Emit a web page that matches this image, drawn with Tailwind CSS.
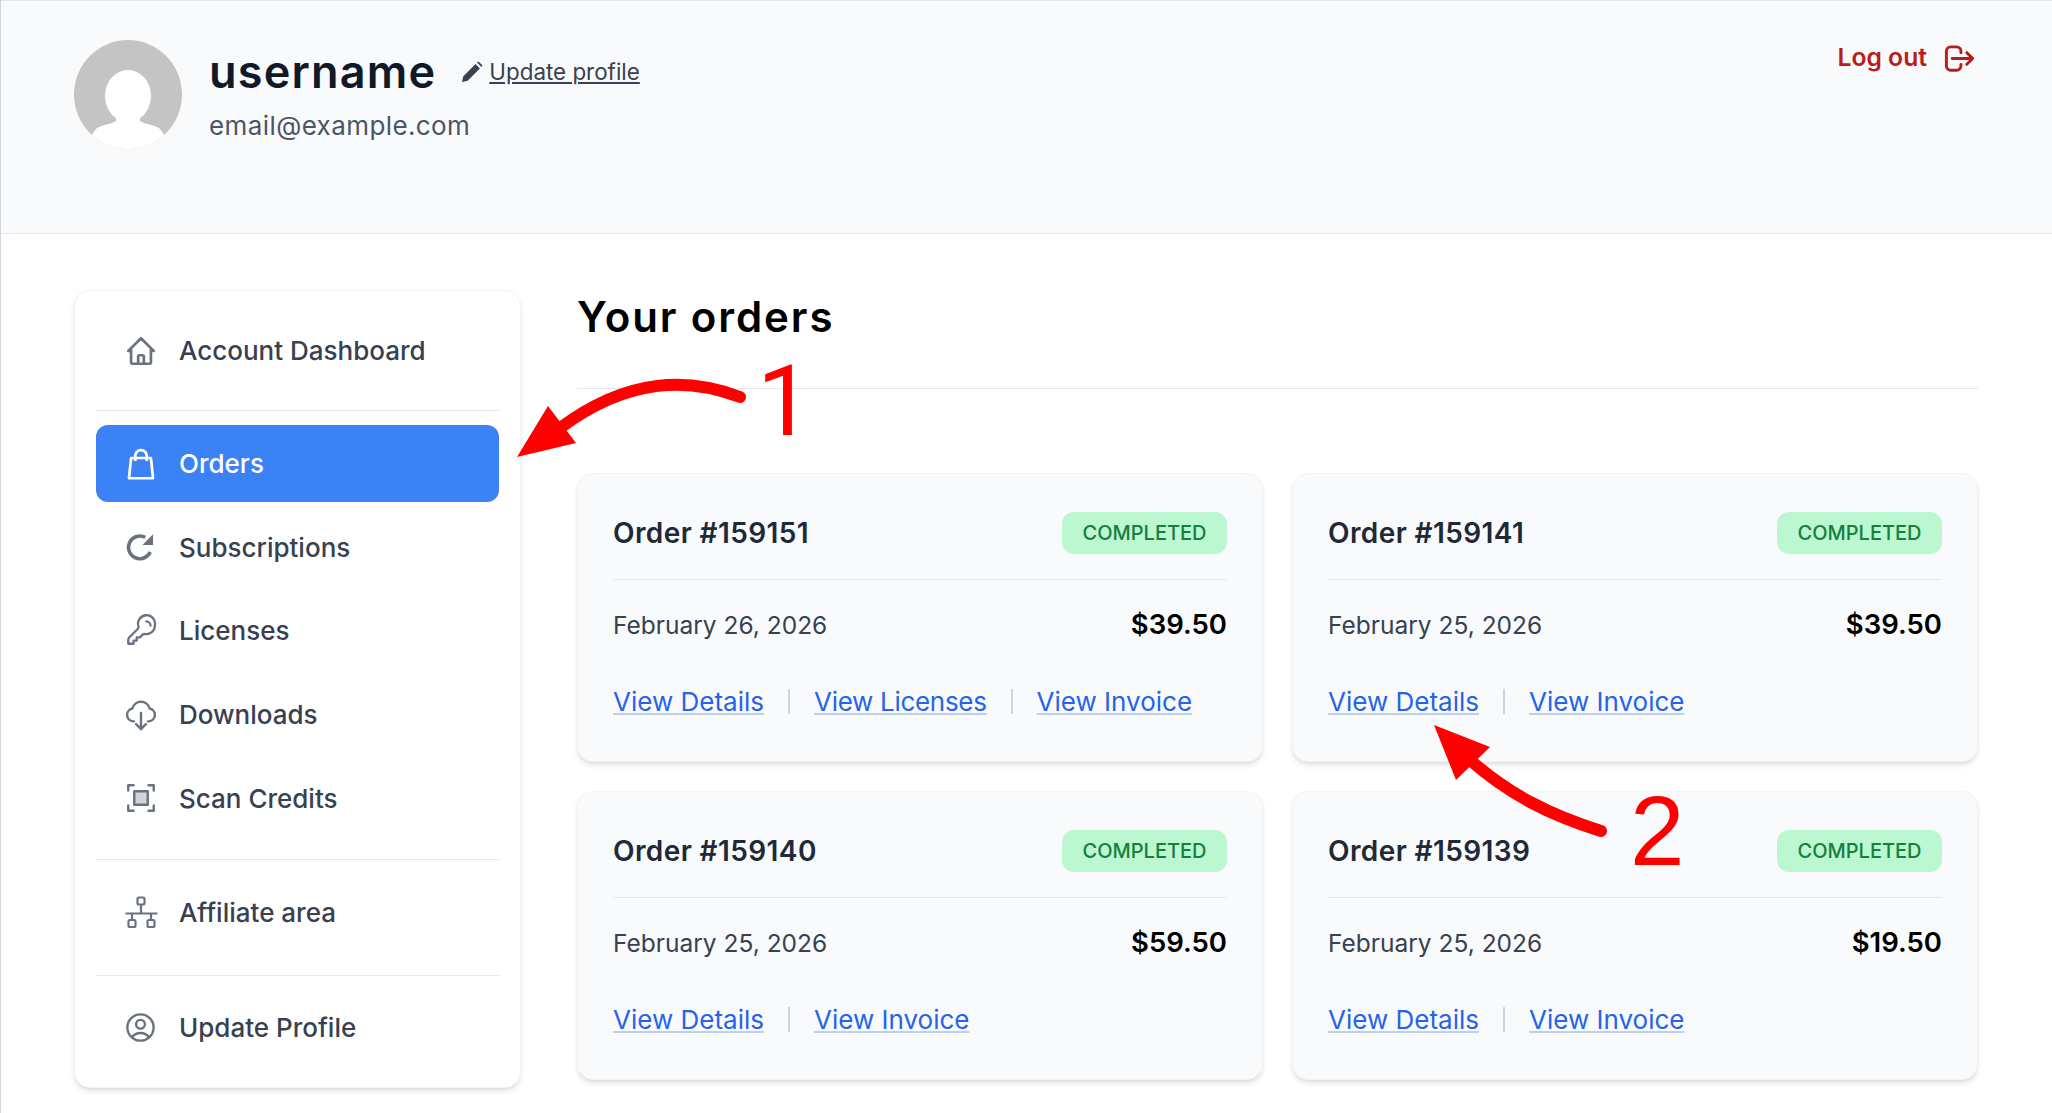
<!DOCTYPE html>
<html lang="en">
<head>
    <meta charset="UTF-8">
    <title>Your orders</title>
    <script src="https://cdn.jsdelivr.net/npm/@tailwindcss/browser@4"></script>
</head>
<body class="bg-white font-['Inter',sans-serif] text-[#374151]">
<div class="relative h-[1113px] overflow-hidden border-l border-gray-300">

    <!-- profile header -->
    <header class="flex h-[234px] justify-between border-y border-gray-200 bg-[#f9fafb] pl-[73px] pr-[75px]">
        <div class="flex items-start pt-[39px]">
            <svg class="h-[109px] w-[108px]" viewBox="0 0 108 109">
                <defs><clipPath id="avatar"><ellipse cx="54" cy="54.5" rx="54" ry="54.5"/></clipPath></defs>
                <ellipse cx="54" cy="54.5" rx="54" ry="54.5" fill="#c4c4c4"/>
                <g clip-path="url(#avatar)" fill="#fff">
                    <ellipse cx="54" cy="56" rx="23" ry="26"/>
                    <path d="M42 76h24v5c4 3 14 4 19 7 3 3 6 8 8 13v10H15v-10c2-5 5-10 8-13 5-3 15-4 19-7z"/>
                </g>
            </svg>
            <div class="ml-[27px] -mt-[4px]">
                <div class="flex h-[72px] items-center">
                    <h1 class="text-[45px] font-semibold tracking-[1.2px] text-[#111827]">username</h1>
                    <svg class="ml-[25px] h-[22px] w-[22px] text-[#374151]" viewBox="0 0 22 22" fill="currentColor"><path d="M1 21l1.2-5.6L14.5 3.1l4.4 4.4L6.6 19.8zM16 1.6l1.5-1.1 4 4-1.1 1.5z"/></svg>
                    <a href="#" class="ml-[6px] text-[22.4px] text-[#374151] underline">Update profile</a>
                </div>
                <p class="mt-[2px] text-[26px] leading-8 tracking-[0.4px] text-[#4b5563]">email@example.com</p>
            </div>
        </div>
        <a href="#" class="mt-[43px] flex h-7 items-center gap-[15px] text-[24.7px] font-semibold text-[#b91c1c]">
            Log out
            <svg class="h-[35px] w-[35px]" viewBox="0 0 24 24" fill="none" stroke="currentColor" stroke-width="2" stroke-linecap="round" stroke-linejoin="round"><path d="M17 16l4-4m0 0l-4-4m4 4H7m6 4v1a3 3 0 01-3 3H6a3 3 0 01-3-3V7a3 3 0 013-3h4a3 3 0 013 3v1"/></svg>
        </a>
    </header>

    <div class="flex items-start gap-14 pl-[73px] pr-[74px] pt-14">

        <!-- account menu -->
        <nav class="w-[447px] shrink-0 rounded-2xl border border-gray-100 bg-white p-[21px] text-[26px] font-medium shadow-md">
            <a href="#" class="flex h-[77px] items-center gap-[22px] px-[29px]">
                <svg class="-mx-[1px] h-[34px] w-[34px] text-gray-500" viewBox="0 0 24 24" fill="none" stroke="currentColor" stroke-width="1.9" stroke-linecap="round" stroke-linejoin="round"><path d="M3 12l2-2m0 0l7-7 7 7M5 10v10a1 1 0 001 1h3m10-11l2 2m-2-2v10a1 1 0 01-1 1h-3m-6 0a1 1 0 001-1v-4a1 1 0 011-1h2a1 1 0 011 1v4a1 1 0 001 1m-6 0h6"/></svg>
                Account Dashboard
            </a>
            <div class="mb-[14px] mt-[21px] border-t border-gray-200"></div>
            <div class="flex flex-col gap-[6.7px]">
                <a href="#" class="flex h-[77px] items-center gap-[22px] rounded-xl bg-[#3b82f6] px-[29px] text-white">
                    <svg class="-mx-[2px] h-[36px] w-[36px]" viewBox="0 0 24 24" fill="none" stroke="currentColor" stroke-width="1.8" stroke-linejoin="round"><path d="M8.2 10V6.5a3.8 3.8 0 017.6 0V10M5.4 8h13.2L20 21.5H4z"/></svg>
                    Orders
                </a>
                <a href="#" class="flex h-[77px] items-center gap-[22px] px-[29px]">
                    <svg class="-mx-[1px] h-[34px] w-[34px] text-gray-500" viewBox="0 0 24 24" fill="none" stroke="currentColor" stroke-width="2.5"><path d="M18.5 15.5A8 8 0 1115 5.2"/><path d="M20.5 3v7.5H13z" fill="currentColor" stroke="none"/></svg>
                    Subscriptions
                </a>
                <a href="#" class="flex h-[77px] items-center gap-[22px] px-[29px]">
                    <svg class="-mx-[1px] h-[34px] w-[34px] text-gray-500" viewBox="0 0 24 24" fill="none" stroke="currentColor" stroke-width="1.6" stroke-linecap="round" stroke-linejoin="round"><path d="M15.75 5.25a3 3 0 013 3m3 0a6 6 0 01-7.03 5.91c-.56-.1-1.16.02-1.57.43L11.25 16.5h-2.25v2.25H6.75V21H3v-2.82c0-.6.24-1.17.66-1.59l6.16-6.16c.41-.41.53-1.01.43-1.57A6 6 0 1121.75 8.25z"/></svg>
                    Licenses
                </a>
                <a href="#" class="flex h-[77px] items-center gap-[22px] px-[29px]">
                    <svg class="-mx-[1px] h-[34px] w-[34px] text-gray-500" viewBox="0 0 24 24" fill="none" stroke="currentColor" stroke-width="1.7" stroke-linecap="round" stroke-linejoin="round"><path d="M7 16.5H6.5a4.6 4.6 0 01-.6-9.1 6.3 6.3 0 0112.2 0 4.6 4.6 0 01-.6 9.1H17"/><path d="M12 10.5V22m-3.5-3.5L12 22l3.5-3.5"/></svg>
                    Downloads
                </a>
                <a href="#" class="flex h-[77px] items-center gap-[22px] px-[29px]">
                    <svg class="-mx-[2px] h-[36px] w-[36px] text-gray-500" viewBox="0 0 24 24" fill="none" stroke="currentColor" stroke-width="1.6" stroke-linecap="round" stroke-linejoin="round"><path d="M3.5 7V3.5H7M17 3.5h3.5V7M20.5 17v3.5H17M7 20.5H3.5V17"/><rect x="7.5" y="7.5" width="9" height="9" fill="#d1d5db"/></svg>
                    Scan Credits
                </a>
            </div>
            <div class="mb-[14px] mt-[22px] border-t border-gray-200"></div>
            <a href="#" class="flex h-[77px] items-center gap-[21px] px-[29px]">
                <svg class="h-[33px] w-[33px] text-gray-500" viewBox="0 0 33 33" fill="none" stroke="currentColor" stroke-width="2.2" stroke-linejoin="round"><rect x="12.5" y="1.5" width="7" height="7" rx="1.5"/><rect x="3.5" y="24" width="7" height="7" rx="1.5"/><rect x="22.5" y="24" width="7" height="7" rx="1.5"/><path d="M16 8.5v8.5M0.5 17.5h32M7 17.5V24M26 17.5V24"/></svg>
                Affiliate area
            </a>
            <div class="mb-[13px] mt-[24px] border-t border-gray-200"></div>
            <a href="#" class="flex h-[77px] items-center gap-[22px] px-[29px]">
                <svg class="-ml-[2px] mr-[-1px] h-[35px] w-[35px] text-gray-500" viewBox="0 0 24 24" fill="none" stroke="currentColor" stroke-width="1.6" stroke-linecap="round" stroke-linejoin="round"><path d="M17.982 18.725A7.488 7.488 0 0012 15.75a7.488 7.488 0 00-5.982 2.975m11.964 0a9 9 0 10-11.963 0m11.963 0A8.966 8.966 0 0112 21a8.966 8.966 0 01-5.982-2.275M15 9.75a3 3 0 11-6 0 3 3 0 016 0z"/></svg>
                Update Profile
            </a>
        </nav>

        <!-- orders -->
        <main class="min-w-0 flex-1">
            <h2 class="flex h-[52px] items-center text-[42px] font-semibold tracking-[1.9px] text-black">Your orders</h2>
            <div class="mt-[46px] border-t border-gray-200"></div>
            <div class="mt-[84px] grid grid-cols-2 gap-[29px]">

                <article class="h-[289px] rounded-2xl border border-gray-100 bg-[#f9fafb] px-[35px] shadow-md">
                    <div class="flex h-[106px] items-center justify-between border-b border-gray-200 pt-[12px]">
                        <h3 class="text-[28px] font-semibold tracking-[0.4px] text-[#1f2937]">Order #159151</h3>
                        <span class="flex h-[42px] w-[165px] items-center justify-center rounded-xl bg-[#bbf7d0] text-[20px] font-medium text-[#15803d]">COMPLETED</span>
                    </div>
                    <div class="mt-[26px] flex items-center justify-between">
                        <span class="text-[24.5px] text-[#374151]">February 26, 2026</span>
                        <span class="-mt-[2px] text-[27.5px] font-semibold text-black">$39.50</span>
                    </div>
                    <div class="mt-[37px] flex items-center gap-[24px] text-[26px] text-[#2563eb]">
                        <a href="#" class="underline decoration-[#bfcfee]">View Details</a>
                        <span class="h-[25px] w-[2px] bg-[#cbd5e1]"></span>
                        <a href="#" class="tracking-[-0.3px] underline decoration-[#bfcfee]">View Licenses</a>
                        <span class="h-[25px] w-[2px] bg-[#cbd5e1]"></span>
                        <a href="#" class="underline decoration-[#bfcfee]">View Invoice</a>
                    </div>
                </article>

                <article class="h-[289px] rounded-2xl border border-gray-100 bg-[#f9fafb] px-[35px] shadow-md">
                    <div class="flex h-[106px] items-center justify-between border-b border-gray-200 pt-[12px]">
                        <h3 class="text-[28px] font-semibold tracking-[0.4px] text-[#1f2937]">Order #159141</h3>
                        <span class="flex h-[42px] w-[165px] items-center justify-center rounded-xl bg-[#bbf7d0] text-[20px] font-medium text-[#15803d]">COMPLETED</span>
                    </div>
                    <div class="mt-[26px] flex items-center justify-between">
                        <span class="text-[24.5px] text-[#374151]">February 25, 2026</span>
                        <span class="-mt-[2px] text-[27.5px] font-semibold text-black">$39.50</span>
                    </div>
                    <div class="mt-[37px] flex items-center gap-[24px] text-[26px] text-[#2563eb]">
                        <a href="#" class="underline decoration-[#bfcfee]">View Details</a>
                        <span class="h-[25px] w-[2px] bg-[#cbd5e1]"></span>
                        <a href="#" class="underline decoration-[#bfcfee]">View Invoice</a>
                    </div>
                </article>

                <article class="h-[289px] rounded-2xl border border-gray-100 bg-[#f9fafb] px-[35px] shadow-md">
                    <div class="flex h-[106px] items-center justify-between border-b border-gray-200 pt-[12px]">
                        <h3 class="text-[28px] font-semibold tracking-[0.4px] text-[#1f2937]">Order #159140</h3>
                        <span class="flex h-[42px] w-[165px] items-center justify-center rounded-xl bg-[#bbf7d0] text-[20px] font-medium text-[#15803d]">COMPLETED</span>
                    </div>
                    <div class="mt-[26px] flex items-center justify-between">
                        <span class="text-[24.5px] text-[#374151]">February 25, 2026</span>
                        <span class="-mt-[2px] text-[27.5px] font-semibold text-black">$59.50</span>
                    </div>
                    <div class="mt-[37px] flex items-center gap-[24px] text-[26px] text-[#2563eb]">
                        <a href="#" class="underline decoration-[#bfcfee]">View Details</a>
                        <span class="h-[25px] w-[2px] bg-[#cbd5e1]"></span>
                        <a href="#" class="underline decoration-[#bfcfee]">View Invoice</a>
                    </div>
                </article>

                <article class="h-[289px] rounded-2xl border border-gray-100 bg-[#f9fafb] px-[35px] shadow-md">
                    <div class="flex h-[106px] items-center justify-between border-b border-gray-200 pt-[12px]">
                        <h3 class="text-[28px] font-semibold tracking-[0.4px] text-[#1f2937]">Order #159139</h3>
                        <span class="flex h-[42px] w-[165px] items-center justify-center rounded-xl bg-[#bbf7d0] text-[20px] font-medium text-[#15803d]">COMPLETED</span>
                    </div>
                    <div class="mt-[26px] flex items-center justify-between">
                        <span class="text-[24.5px] text-[#374151]">February 25, 2026</span>
                        <span class="-mt-[2px] text-[27.5px] font-semibold text-black">$19.50</span>
                    </div>
                    <div class="mt-[37px] flex items-center gap-[24px] text-[26px] text-[#2563eb]">
                        <a href="#" class="underline decoration-[#bfcfee]">View Details</a>
                        <span class="h-[25px] w-[2px] bg-[#cbd5e1]"></span>
                        <a href="#" class="underline decoration-[#bfcfee]">View Invoice</a>
                    </div>
                </article>
            </div>
        </main>
    </div>

    <!-- red annotations drawn over the page -->
    <svg class="pointer-events-none absolute left-[-1px] top-0 h-[1113px] w-[2052px]" viewBox="0 0 2052 1113" fill="none">
        <path d="M740 397C690 378 630 376 560 428" stroke="#ff0000" stroke-width="12" stroke-linecap="round"/>
        <path d="M517 457L548 406L576 443Z" fill="#ff0000"/>
        <path d="M1601 831C1550 815 1510 795 1470 760" stroke="#ff0000" stroke-width="12" stroke-linecap="round"/>
        <path d="M1434 725L1490 747L1456 780Z" fill="#ff0000"/>
    </svg>
    <span class="pointer-events-none absolute left-[756px] top-[346px] font-['Roboto',sans-serif] text-[98px] leading-[112px] text-[#ff0000]">1</span>
    <span class="pointer-events-none absolute left-[1629px] top-[775px] font-['Liberation_Sans',sans-serif] text-[98px] leading-[112px] text-[#ff0000]">2</span>
</div>
</body>
</html>
